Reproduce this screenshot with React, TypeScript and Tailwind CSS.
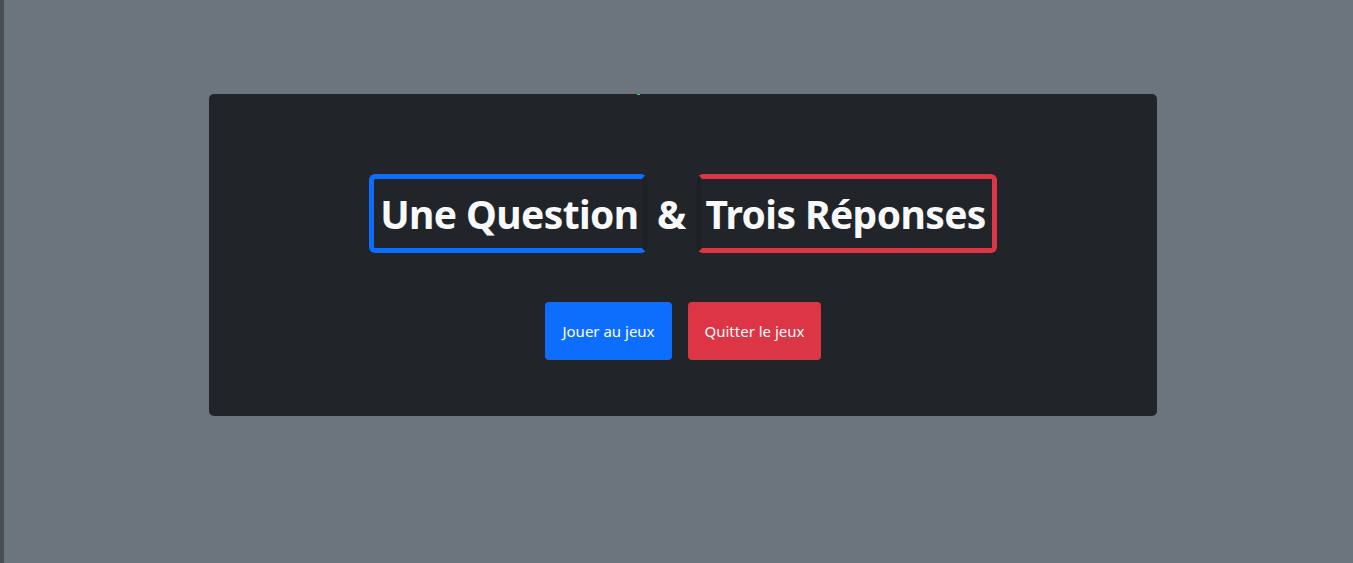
export default function App() {
  return (
    <div className="flex h-[563px] w-full bg-[#6c757d]" style={{ fontFamily: '"Noto Sans", "Open Sans", sans-serif' }}>
      <div className="w-[4px] shrink-0 bg-[#4a4f54]" />
      <div className="flex-1 pl-[205px] pt-[94px]">
        <div className="relative flex h-[322px] w-[948px] flex-col items-center rounded-[5px] bg-[#212529] pt-[80px]">
          <span className="absolute left-[428px] top-0 h-[1px] w-[3px] bg-[#22e05a]" />
          <div className="flex items-center text-[#f8f9fa] font-bold">
            <div className="flex h-[79px] items-center rounded-[6px] border-[5px] border-[#0d6efd] border-r-[#1d2024] pl-[6px] pr-[3px] text-[39px] leading-none tracking-[-0.6px]">
              Une Question
            </div>
            <div className="w-[50px] text-center text-[39px] leading-none">&amp;</div>
            <div className="flex h-[79px] items-center rounded-[6px] border-[5px] border-[#dc3545] border-l-[#1d2024] pl-[4px] pr-[6px] text-[39px] leading-none tracking-[-0.6px]">
              Trois Réponses
            </div>
          </div>
          <div className="mt-[49px] flex gap-[16px]">
            <button className="h-[58px] w-[127px] rounded-[4px] bg-[#0d6efd] text-[15px] text-white">
              Jouer au jeux
            </button>
            <button className="h-[58px] w-[133px] rounded-[4px] bg-[#dc3545] text-[15px] text-white">
              Quitter le jeux
            </button>
          </div>
        </div>
      </div>
    </div>
  );
}
